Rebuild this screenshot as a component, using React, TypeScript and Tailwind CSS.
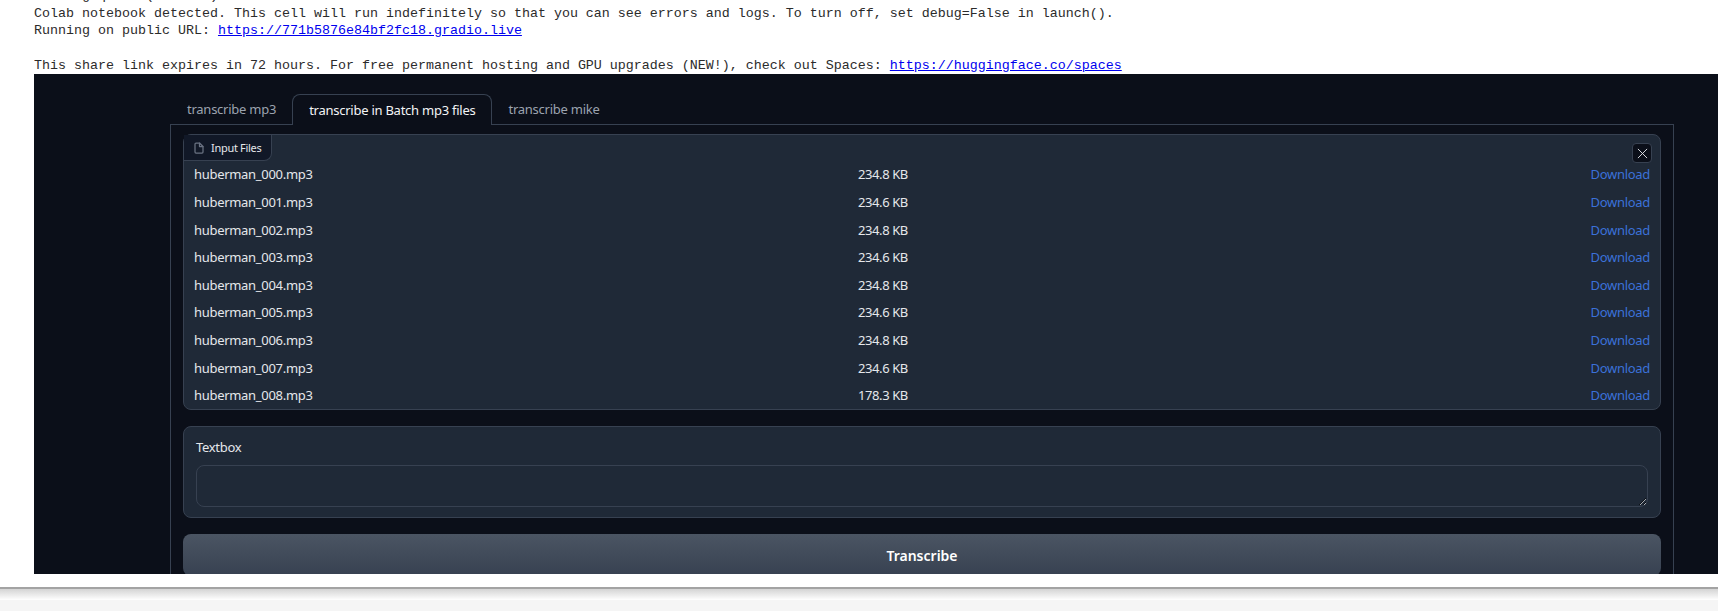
const files = [
  { name: "huberman_000.mp3", size: "234.8 KB" },
  { name: "huberman_001.mp3", size: "234.6 KB" },
  { name: "huberman_002.mp3", size: "234.8 KB" },
  { name: "huberman_003.mp3", size: "234.6 KB" },
  { name: "huberman_004.mp3", size: "234.8 KB" },
  { name: "huberman_005.mp3", size: "234.6 KB" },
  { name: "huberman_006.mp3", size: "234.8 KB" },
  { name: "huberman_007.mp3", size: "234.6 KB" },
  { name: "huberman_008.mp3", size: "178.3 KB" },
];

function FileIcon() {
  return (
    <svg className="h-[12px] w-[12px] text-gray-500" viewBox="0 0 24 24" fill="none" stroke="currentColor" strokeWidth="2.5" strokeLinecap="round" strokeLinejoin="round">
      <path d="M13 2H6a2 2 0 0 0-2 2v16a2 2 0 0 0 2 2h12a2 2 0 0 0 2-2V9z" />
      <path d="M13 2v7h7" />
    </svg>
  );
}

export default function App() {
  return (
    <div className="h-[611px] w-[1718px] overflow-hidden bg-white font-['Noto_Sans',sans-serif]">
      {/* Colab output */}
      <div className="h-[587px] overflow-hidden pl-[34px]">
        <pre className="-mt-[13px] h-[87px] overflow-hidden font-['Liberation_Mono',monospace] text-[13.33px] leading-[17.5px] text-[#2b2b2b]">
          {"Setting queue (enabled)\nColab notebook detected. This cell will run indefinitely so that you can see errors and logs. To turn off, set debug=False in launch().\nRunning on public URL: "}
          <a className="text-[#0000ee] underline">https://771b5876e84bf2fc18.gradio.live</a>
          {"\n\nThis share link expires in 72 hours. For free permanent hosting and GPU upgrades (NEW!), check out Spaces: "}
          <a className="text-[#0000ee] underline">https://huggingface.co/spaces</a>
        </pre>

        {/* Gradio app */}
        <div className="h-[500px] overflow-hidden bg-[#0b0f19] pl-[136px] pr-[44px] pt-[20px] tracking-[-0.3px] text-[#f3f4f6]">
          <div className="flex h-[30px] text-[13px] leading-[30px] tracking-[-0.25px]">
            <div className="pl-[17px] pr-[16px] text-[#9ca3af]">transcribe mp3</div>
            <div className="relative z-10 h-[31px] rounded-t-lg border border-b-0 border-[#374151] bg-[#0b0f19] px-[16px]">transcribe in Batch mp3 files</div>
            <div className="px-[16px] text-[#9ca3af]">transcribe mike</div>
          </div>
          <div className="h-[500px] border border-[#374151] px-[12px] pt-[9px]">
            <div className="relative h-[276px] rounded-lg border border-[#374151] bg-[#1f2937]">
              <div className="flex h-[26px] w-[88px] items-center gap-[6px] rounded-br-lg border-r border-b border-[#374151] bg-[#111827] pl-[9px] pt-[1px] text-[11px] text-[#e5e7eb]">
                <FileIcon />
                Input Files
              </div>
              <button className="absolute right-[8px] top-[8px] flex h-[20px] w-[20px] items-center justify-center rounded border border-[#374151] bg-[#0b0f19]">
                <svg className="h-[11px] w-[11px]" viewBox="0 0 12 12" fill="none" stroke="#e5e7eb" strokeWidth="1">
                  <path d="M1 1l10 10M11 1L1 11" />
                </svg>
              </button>
              <div className="px-[10px] pt-[0.4px] text-[13px] text-[#e5e7eb]">
                {files.map((f) => (
                  <div key={f.name} className="grid h-[27.6px] grid-cols-[664px_1fr_auto] items-center">
                    <div>{f.name}</div>
                    <div className="tracking-[-0.4px]">{f.size}</div>
                    <div className="text-[#3b71d9]">Download</div>
                  </div>
                ))}
              </div>
            </div>
            <div className="mt-[16px] h-[92px] rounded-lg border border-[#374151] bg-[#1f2937] px-[12px] pt-[10px]">
              <div className="text-[13px] leading-[20px] text-[#e5e7eb]">Textbox</div>
              <textarea className="mt-[8px] block h-[42px] w-full rounded-lg border border-[#374151] bg-[#1f2937] outline-none" />
            </div>
            <button className="mt-[16px] h-[42px] w-full rounded-lg bg-gradient-to-b from-[#4b5563] to-[#374151] text-[14px] font-semibold tracking-normal text-white">
              Transcribe
            </button>
          </div>
        </div>
      </div>

      {/* Bottom of the notebook cell */}
      <div className="h-[13px] border-t-2 border-[#a3a3a3] bg-gradient-to-b from-[#d4d4d4] to-white" />
      <div className="h-[11px] bg-[#f5f5f5]" />
    </div>
  );
}
